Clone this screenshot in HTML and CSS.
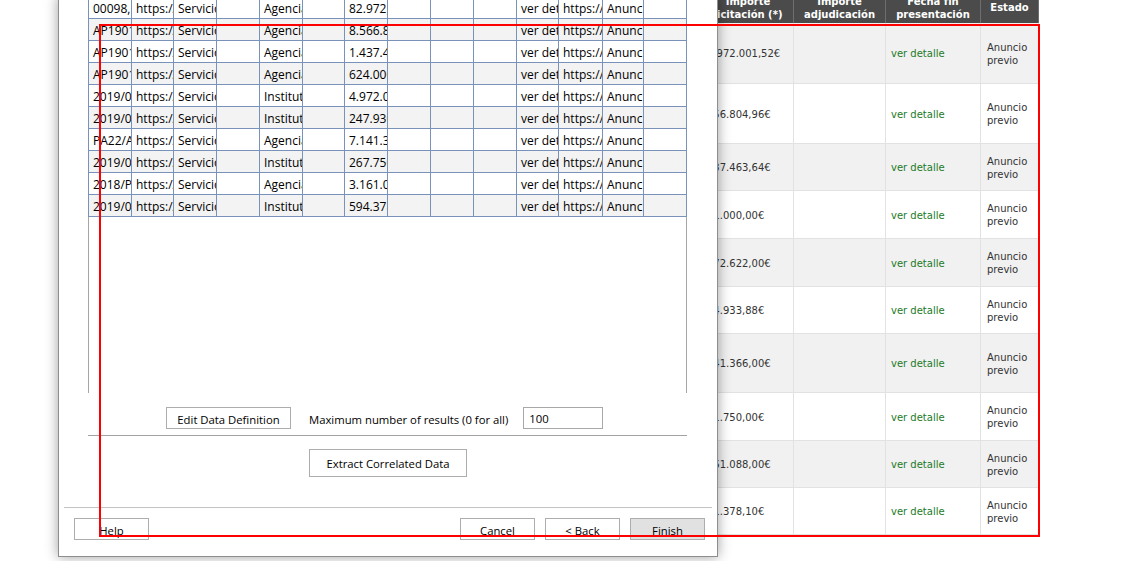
FILE: index.html
```html
<!DOCTYPE html>
<html lang="es">
<head>
<meta charset="utf-8">
<title>Extract Data</title>
<link rel="stylesheet" href="styles.css">
</head>
<body>
<div class="page">
  <div class="results">
    <div class="rrow head">
      <div class="cell c1">Importe licitación (*)</div>
      <div class="cell c2">Importe adjudicación</div>
      <div class="cell c3">Fecha fin presentación</div>
      <div class="cell c4">Estado</div>
    </div>
    <div class="rrow alt"><div class="cell c1">1.972.001,52€</div><div class="cell c2"></div><div class="cell c3 link">ver detalle</div><div class="cell c4">Anuncio previo</div></div>
    <div class="rrow"><div class="cell c1">156.804,96€</div><div class="cell c2"></div><div class="cell c3 link">ver detalle</div><div class="cell c4">Anuncio previo</div></div>
    <div class="rrow alt"><div class="cell c1">137.463,64€</div><div class="cell c2"></div><div class="cell c3 link">ver detalle</div><div class="cell c4">Anuncio previo</div></div>
    <div class="rrow"><div class="cell c1">41.000,00€</div><div class="cell c2"></div><div class="cell c3 link">ver detalle</div><div class="cell c4">Anuncio previo</div></div>
    <div class="rrow alt"><div class="cell c1">172.622,00€</div><div class="cell c2"></div><div class="cell c3 link">ver detalle</div><div class="cell c4">Anuncio previo</div></div>
    <div class="rrow"><div class="cell c1">44.933,88€</div><div class="cell c2"></div><div class="cell c3 link">ver detalle</div><div class="cell c4">Anuncio previo</div></div>
    <div class="rrow alt"><div class="cell c1">141.366,00€</div><div class="cell c2"></div><div class="cell c3 link">ver detalle</div><div class="cell c4">Anuncio previo</div></div>
    <div class="rrow"><div class="cell c1">41.750,00€</div><div class="cell c2"></div><div class="cell c3 link">ver detalle</div><div class="cell c4">Anuncio previo</div></div>
    <div class="rrow alt"><div class="cell c1">161.088,00€</div><div class="cell c2"></div><div class="cell c3 link">ver detalle</div><div class="cell c4">Anuncio previo</div></div>
    <div class="rrow"><div class="cell c1">41.378,10€</div><div class="cell c2"></div><div class="cell c3 link">ver detalle</div><div class="cell c4">Anuncio previo</div></div>
  </div>
</div>

<div class="dialog">
  <div class="grid">
    <div class="grow"><div>00098,19</div><div>https://</div><div>Servicios</div><div></div><div>Agencia</div><div></div><div>82.972,50</div><div></div><div></div><div></div><div>ver detalle</div><div>https://</div><div>Anuncio previo</div><div></div></div>
    <div class="grow"><div>AP19012</div><div>https://</div><div>Servicios</div><div></div><div>Agencia</div><div></div><div>8.566.848,00</div><div></div><div></div><div></div><div>ver detalle</div><div>https://</div><div>Anuncio previo</div><div></div></div>
    <div class="grow"><div>AP19013</div><div>https://</div><div>Servicios</div><div></div><div>Agencia</div><div></div><div>1.437.448,00</div><div></div><div></div><div></div><div>ver detalle</div><div>https://</div><div>Anuncio previo</div><div></div></div>
    <div class="grow"><div>AP19014</div><div>https://</div><div>Servicios</div><div></div><div>Agencia</div><div></div><div>624.000,00</div><div></div><div></div><div></div><div>ver detalle</div><div>https://</div><div>Anuncio previo</div><div></div></div>
    <div class="grow"><div>2019/0012</div><div>https://</div><div>Servicios</div><div></div><div>Instituto</div><div></div><div>4.972.001,52</div><div></div><div></div><div></div><div>ver detalle</div><div>https://</div><div>Anuncio previo</div><div></div></div>
    <div class="grow"><div>2019/0013</div><div>https://</div><div>Servicios</div><div></div><div>Instituto</div><div></div><div>247.930,00</div><div></div><div></div><div></div><div>ver detalle</div><div>https://</div><div>Anuncio previo</div><div></div></div>
    <div class="grow"><div>PA22/A01</div><div>https://</div><div>Servicios</div><div></div><div>Agencia</div><div></div><div>7.141.366,00</div><div></div><div></div><div></div><div>ver detalle</div><div>https://</div><div>Anuncio previo</div><div></div></div>
    <div class="grow"><div>2019/0014</div><div>https://</div><div>Servicios</div><div></div><div>Instituto</div><div></div><div>267.750,00</div><div></div><div></div><div></div><div>ver detalle</div><div>https://</div><div>Anuncio previo</div><div></div></div>
    <div class="grow"><div>2018/P01</div><div>https://</div><div>Servicios</div><div></div><div>Agencia</div><div></div><div>3.161.088,00</div><div></div><div></div><div></div><div>ver detalle</div><div>https://</div><div>Anuncio previo</div><div></div></div>
    <div class="grow"><div>2019/0015</div><div>https://</div><div>Servicios</div><div></div><div>Instituto</div><div></div><div>594.378,10</div><div></div><div></div><div></div><div>ver detalle</div><div>https://</div><div>Anuncio previo</div><div></div></div>
    <div class="gfill"></div>
  </div>

  <div class="opts">
    <button class="btn btn-edit">Edit Data Definition</button>
    <span class="opts-label">Maximum number of results (0 for all)</span>
    <div class="num">100</div>
  </div>
  <div class="sep sep1"></div>
  <button class="btn btn-extract">Extract Correlated Data</button>
  <div class="sep sep2"></div>
  <div class="footer">
    <button class="btn btn-help">Help</button>
    <div class="footer-right">
      <button class="btn">Cancel</button>
      <button class="btn">&lt; Back</button>
      <button class="btn btn-finish">Finish</button>
    </div>
  </div>
</div>

<div class="highlight"></div>
</body>
</html>
```

FILE: styles.css
```css
html, body {
  margin: 0;
  padding: 0;
}
body {
  width: 1139px;
  height: 561px;
  overflow: hidden;
  position: relative;
  background: #ffffff;
  font-family: "DejaVu Sans", Verdana, sans-serif;
}

/* ---------- web page behind ---------- */
.page {
  padding-left: 703px;
}
.results {
  margin-top: -8px;
  width: 336px;
  font-size: 10px;
  line-height: 13px;
  color: #333333;
}
.rrow {
  display: flex;
  height: 47px;
}
.rrow.alt .cell {
  background: #f1f1f1;
}
.cell {
  box-sizing: border-box;
  border-right: 1px solid #e2e2e2;
  border-bottom: 1px solid #e2e2e2;
  padding: 1px 5px 0 5px;
  display: flex;
  align-items: center;
  overflow: hidden;
  white-space: normal;
}
.c1 { width: 91px; white-space: nowrap; padding-left: 4px; }
.c2 { width: 92px; }
.c3 { width: 95px; }
.c4 { width: 58px; padding-left: 6px; }

.rrow.head {
  height: 31px;
}
.rrow.head .cell {
  background: #4b4b4b;
  color: #ffffff;
  font-weight: bold;
  justify-content: center;
  text-align: center;
  padding: 0 5px;
  border-right: 1px solid #6e6e6e;
  border-bottom: none;
  white-space: normal;
}
.results .rrow:nth-child(2) { height: 61px; }
.results .rrow:nth-child(3) { height: 60px; }
.results .rrow:nth-child(4) { height: 47px; }
.results .rrow:nth-child(5) { height: 48px; }
.results .rrow:nth-child(6) { height: 48px; }
.results .rrow:nth-child(7) { height: 47px; }
.results .rrow:nth-child(8) { height: 59px; }
.results .rrow:nth-child(9) { height: 48px; }
.results .rrow:nth-child(10) { height: 47px; }
.results .rrow:nth-child(11) { height: 47px; }

.link {
  color: #1c7a28;
}

/* ---------- dialog window ---------- */
.dialog {
  position: absolute;
  left: 58px;
  top: -4px;
  width: 660px;
  height: 561px;
  box-sizing: border-box;
  border: 1px solid #8e8e8e;
  background: #ffffff;
  box-shadow: 0 0 12px rgba(0, 0, 0, 0.38);
  font-family: "Open Sans", "Noto Sans", sans-serif;
  font-size: 11.3px;
  color: #000000;
  display: flex;
  flex-direction: column;
  z-index: 5;
}

.grid {
  margin-left: 29px;
  width: 599px;
  height: 396px;
  display: flex;
  flex-direction: column;
  font-size: 12px;
}
.grow {
  display: grid;
  grid-template-columns: 43px 42px 43px 43px 43px 42px 43px 43px 43px 43px 42px 44px 41px 43px;
  height: 22px;
  border-left: 1px solid #7892b9;
  background: #ffffff;
}
.grow:nth-child(even) {
  background: #f3f3f3;
}
.grow > div {
  box-sizing: border-box;
  border-right: 1px solid #7892b9;
  border-bottom: 1px solid #7892b9;
  padding: 3px 0 0 4px;
  line-height: 18px;
  white-space: nowrap;
  overflow: hidden;
}
.gfill {
  flex: 1;
  border-left: 1px solid #a6a6a6;
  border-right: 1px solid #a6a6a6;
}

.btn {
  box-sizing: border-box;
  height: 22px;
  width: 75px;
  padding: 3px 0 0 0;
  margin: 0;
  border: 1px solid #adadad;
  background: #ffffff;
  font-family: inherit;
  font-size: inherit;
  color: #000000;
  line-height: 17px;
  text-align: center;
}

.opts {
  margin-top: 14px;
  padding-left: 107px;
  display: flex;
  align-items: center;
  height: 22px;
}
.btn-edit {
  width: 125px;
}
.opts-label {
  margin-left: 18px;
  padding-top: 3px;
  white-space: nowrap;
}
.num {
  margin-left: 15px;
  box-sizing: border-box;
  width: 80px;
  height: 22px;
  border: 1px solid #a8a8a8;
  padding: 2px 0 0 5px;
  line-height: 18px;
}

.sep {
  height: 1px;
  background: #a3a3a3;
}
.sep1 {
  margin-top: 6px;
  margin-left: 29px;
  width: 599px;
}
.btn-extract {
  margin-top: 13px;
  margin-left: 250px;
  width: 158px;
  height: 28px;
  padding-top: 2px;
  line-height: 24px;
}
.sep2 {
  margin: 30px 5px 0 5px;
  background: #c4c4c4;
}

.footer {
  margin-top: 10px;
  padding: 0 12px 0 15px;
  display: flex;
  justify-content: space-between;
  align-items: center;
}
.footer-right {
  display: flex;
  gap: 10px;
}
.btn-finish {
  background: #e1e1e1;
}

/* ---------- red highlight overlay ---------- */
.highlight {
  position: absolute;
  left: 99px;
  top: 24px;
  width: 941px;
  height: 513px;
  box-sizing: border-box;
  border: 2px solid #ff0000;
  z-index: 10;
  pointer-events: none;
}
```
